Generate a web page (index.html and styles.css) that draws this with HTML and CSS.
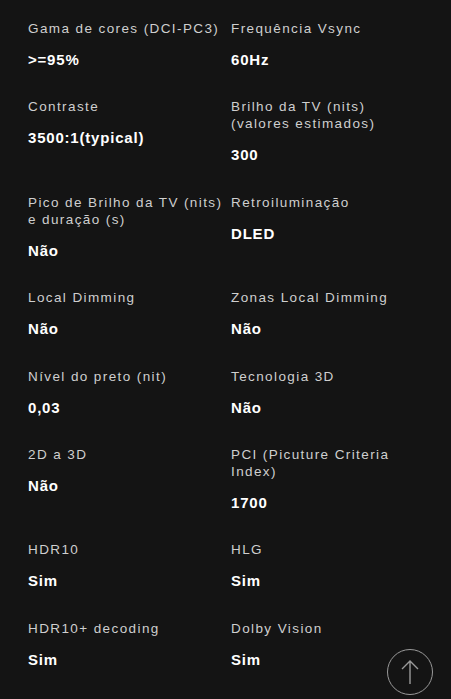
FILE: index.html
```html
<!DOCTYPE html>
<html>
<head>
<meta name="viewport" content="width=device-width, initial-scale=1">
<link rel="stylesheet" href="styles.css">
</head>
<body>

<div class="specs">
  <div class="spec">
    <p class="label">Gama de cores (DCI-PC3)</p>
    <p class="value">&gt;=95%</p>
  </div>
  <div class="spec">
    <p class="label">Frequência Vsync</p>
    <p class="value">60Hz</p>
  </div>

  <div class="spec">
    <p class="label">Contraste</p>
    <p class="value">3500:1(typical)</p>
  </div>
  <div class="spec">
    <p class="label">Brilho da TV (nits)<br>(valores estimados)</p>
    <p class="value">300</p>
  </div>

  <div class="spec">
    <p class="label">Pico de Brilho da TV (nits) e duração (s)</p>
    <p class="value">Não</p>
  </div>
  <div class="spec">
    <p class="label">Retroiluminação</p>
    <p class="value">DLED</p>
  </div>

  <div class="spec">
    <p class="label">Local Dimming</p>
    <p class="value">Não</p>
  </div>
  <div class="spec">
    <p class="label">Zonas Local Dimming</p>
    <p class="value">Não</p>
  </div>

  <div class="spec">
    <p class="label">Nível do preto (nit)</p>
    <p class="value">0,03</p>
  </div>
  <div class="spec">
    <p class="label">Tecnologia 3D</p>
    <p class="value">Não</p>
  </div>

  <div class="spec">
    <p class="label">2D a 3D</p>
    <p class="value">Não</p>
  </div>
  <div class="spec">
    <p class="label">PCI (Picuture Criteria Index)</p>
    <p class="value">1700</p>
  </div>

  <div class="spec">
    <p class="label">HDR10</p>
    <p class="value">Sim</p>
  </div>
  <div class="spec">
    <p class="label">HLG</p>
    <p class="value">Sim</p>
  </div>

  <div class="spec">
    <p class="label">HDR10+ decoding</p>
    <p class="value">Sim</p>
  </div>
  <div class="spec">
    <p class="label">Dolby Vision</p>
    <p class="value">Sim</p>
  </div>
</div>

<a class="to-top" href="#">
  <svg width="20" height="26" viewBox="0 0 20 26">
    <path d="M10 25 V2 M2 10 L10 2 L18 10" fill="none" stroke="#9a9a9a" stroke-width="1.4"/>
  </svg>
</a>

</body>
</html>
```

FILE: styles.css
```css
body {
  font-family: "Liberation Sans", Arial, sans-serif;
  background-color: #141414;
  margin: 0;
}

html {
  box-sizing: border-box;
}

*, *:before, *:after {
  box-sizing: inherit;
}

.specs {
  display: grid;
  grid-template-columns: 203px 1fr;
  padding: 20px 20px 0 28px;
}

.spec {
  padding-bottom: 30.4px;
}

.label {
  margin: 0 0 14px;
  font-size: 13.5px;
  line-height: 17px;
  letter-spacing: 1.4px;
  color: #cfcfcf;
}

.value {
  margin: 0;
  font-size: 15px;
  line-height: 17px;
  font-weight: bold;
  letter-spacing: 0.8px;
  color: #fff;
}

.to-top {
  position: fixed;
  left: 387px;
  top: 649px;
  width: 46px;
  height: 46px;
  border: 1.5px solid #9a9a9a;
  border-radius: 50%;
  display: flex;
  align-items: center;
  justify-content: center;
}
```
